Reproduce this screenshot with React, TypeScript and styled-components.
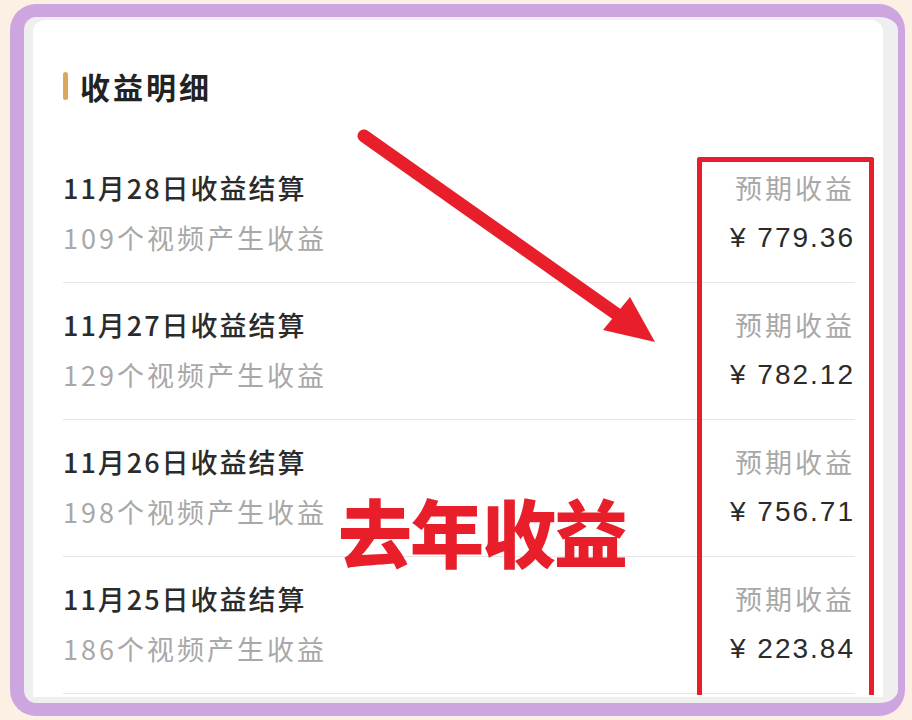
import React from "react";
import styled, { createGlobalStyle } from "styled-components";

const Global = createGlobalStyle`
  html, body { margin: 0; padding: 0; background: #fcefe4; }
  body { font-family: "Noto Sans CJK SC", "Noto Sans", sans-serif; }
  * { box-sizing: border-box; }
`;

const Page = styled.div`
  width: 912px;
  height: 720px;
  padding: 4px 7px 4px 10px;
`;

const Frame = styled.div`
  width: 100%;
  height: 100%;
  border-style: solid;
  border-color: #cea6df;
  border-width: 13px 7px 13px 14px;
  border-radius: 26px;
  background: #efefef;
  padding: 3px 15px 6px 9px;
  overflow: hidden;
`;

const Card = styled.div`
  position: relative;
  height: 100%;
  background: #ffffff;
  border-radius: 12px 12px 0 0;
  padding: 46px 28px 0 30px;
  overflow: hidden;
`;

const Header = styled.div`
  display: flex;
  align-items: center;
  gap: 12px;
  height: 40px;
  margin-bottom: 40px;
`;

const Accent = styled.span`
  width: 5px;
  height: 28px;
  border-radius: 3px;
  background: #d9a75d;
`;

const HeaderTitle = styled.h2`
  margin: 0;
  font-size: 30px;
  font-weight: 700;
  color: #222;
  letter-spacing: 3px;
`;

const Row = styled.div`
  display: flex;
  justify-content: space-between;
  padding: 17px 0 19px 0;
  border-bottom: 1px solid #e6e6e6;
`;

const Col = styled.div<{ $align?: "start" | "end" }>`
  display: flex;
  flex-direction: column;
  align-items: ${(p) => (p.$align === "end" ? "flex-end" : "flex-start")};
`;

const Line = styled.div<{ $tone: "dark" | "muted"; $weight?: number }>`
  height: 50px;
  line-height: 50px;
  font-size: 27px;
  font-weight: ${(p) => p.$weight ?? 400};
  color: ${(p) => (p.$tone === "dark" ? "#2b2b2b" : "#a8a8a8")};
  letter-spacing: ${(p) => (p.$tone === "dark" ? "2px" : "3px")};
  white-space: nowrap;
`;

const Amount = styled(Line)`
  font-family: "Liberation Sans", "Noto Sans CJK SC", sans-serif;
  font-size: 28px;
  font-weight: 500;
  letter-spacing: 2px;
`;

const Highlight = styled.div`
  position: absolute;
  left: 664px;
  top: 137px;
  width: 177px;
  height: 538px;
  border: 5px solid #e81f2a;
  border-bottom: none;
  border-radius: 3px 3px 0 0;
  pointer-events: none;
`;

const ArrowSvg = styled.svg`
  position: absolute;
  left: 0;
  top: 0;
  pointer-events: none;
`;

const Stamp = styled.div`
  position: absolute;
  left: 305px;
  top: 466px;
  font-size: 74px;
  line-height: 88px;
  font-weight: 900;
  color: #e81f2a;
  letter-spacing: -2px;
  white-space: nowrap;
`;

const rows = [
  { date: "11月28日收益结算", count: "109个视频产生收益", amount: "779.36" },
  { date: "11月27日收益结算", count: "129个视频产生收益", amount: "782.12" },
  { date: "11月26日收益结算", count: "198个视频产生收益", amount: "756.71" },
  { date: "11月25日收益结算", count: "186个视频产生收益", amount: "223.84" },
];

export default function App() {
  return (
    <Page>
      <Global />
      <Frame>
        <Card>
          <Header>
            <Accent />
            <HeaderTitle>收益明细</HeaderTitle>
          </Header>
          {rows.map((r) => (
            <Row key={r.date}>
              <Col>
                <Line $tone="dark" $weight={500}>{r.date}</Line>
                <Line $tone="muted">{r.count}</Line>
              </Col>
              <Col $align="end">
                <Line $tone="muted">预期收益</Line>
                <Amount $tone="dark">¥ {r.amount}</Amount>
              </Col>
            </Row>
          ))}
          <Highlight />
          <ArrowSvg width="850" height="680" viewBox="0 0 850 680">
            <line x1="331" y1="116" x2="592" y2="300" stroke="#e81f2a" strokeWidth="13" strokeLinecap="round" />
            <polygon points="622,322 570,310 597,277" fill="#e81f2a" />
          </ArrowSvg>
          <Stamp>去年收益</Stamp>
        </Card>
      </Frame>
    </Page>
  );
}
